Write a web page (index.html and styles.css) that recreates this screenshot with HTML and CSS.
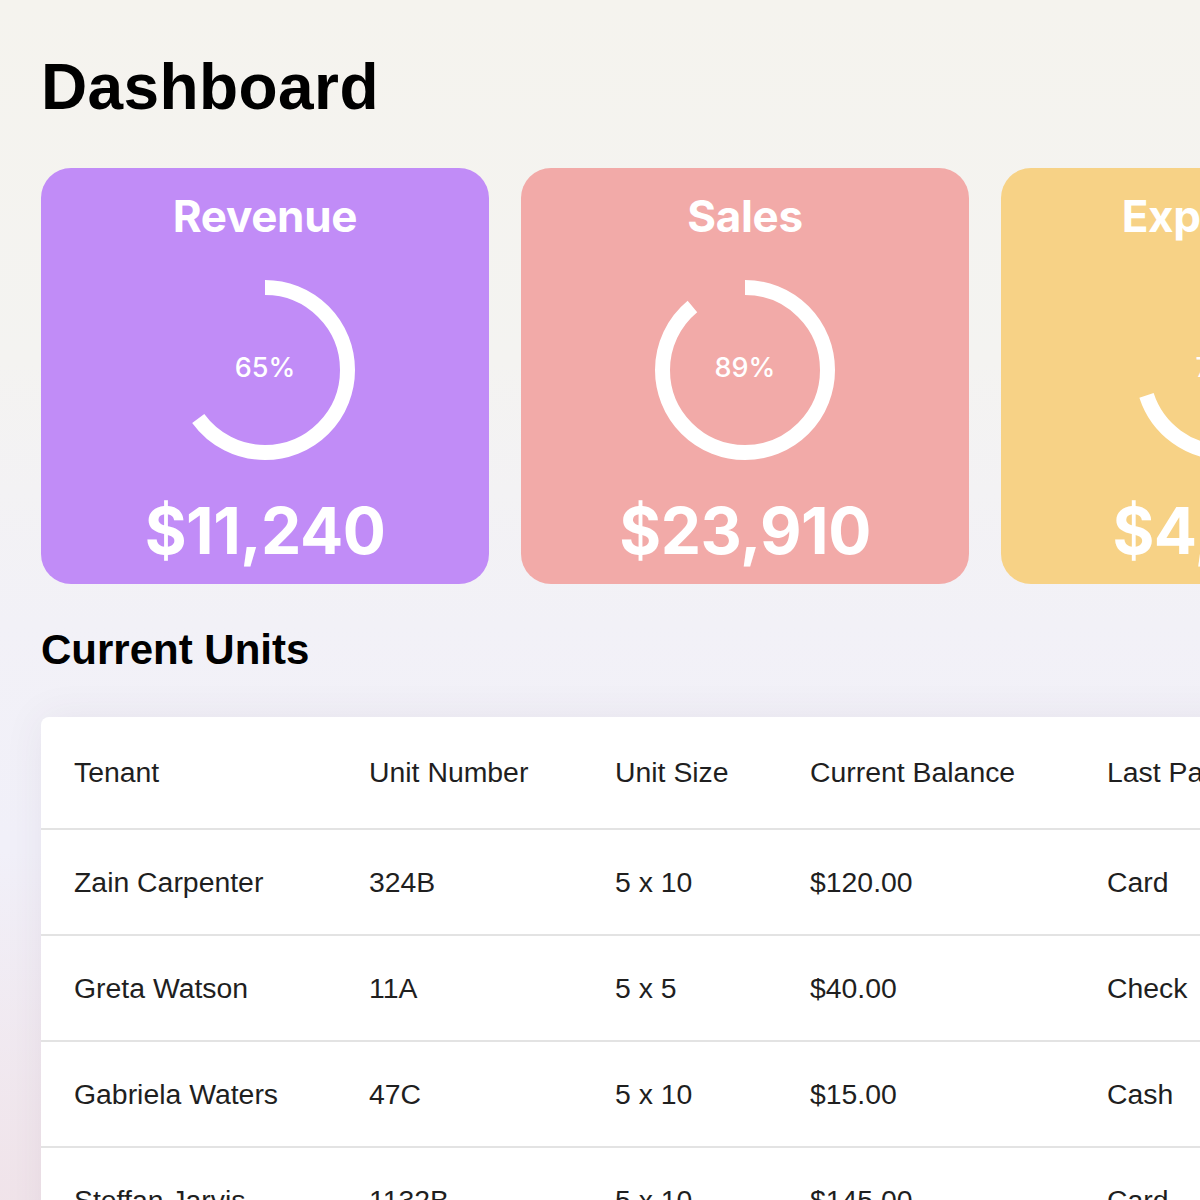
FILE: index.html
```html
<!DOCTYPE html>
<html lang="en">
<head>
<meta charset="utf-8">
<title>Dashboard</title>
<link rel="stylesheet" href="styles.css">
</head>
<body>
<main class="page">
  <h1 class="page-title">Dashboard</h1>

  <section class="stats">
    <div class="stat-card stat-revenue">
      <h2 class="stat-title">Revenue</h2>
      <div class="gauge">
        <svg class="gauge-svg" viewBox="0 0 180 180" width="180" height="180">
          <circle class="gauge-arc" cx="90" cy="90" r="82.5" pathLength="100" stroke-dasharray="65 100" transform="rotate(-90 90 90)"/>
        </svg>
        <span class="gauge-label">65%</span>
      </div>
      <div class="stat-value">$11,240</div>
    </div>

    <div class="stat-card stat-sales">
      <h2 class="stat-title">Sales</h2>
      <div class="gauge">
        <svg class="gauge-svg" viewBox="0 0 180 180" width="180" height="180">
          <circle class="gauge-arc" cx="90" cy="90" r="82.5" pathLength="100" stroke-dasharray="89 100" transform="rotate(-90 90 90)"/>
        </svg>
        <span class="gauge-label">89%</span>
      </div>
      <div class="stat-value">$23,910</div>
    </div>

    <div class="stat-card stat-expenses">
      <h2 class="stat-title">Expenses</h2>
      <div class="gauge">
        <svg class="gauge-svg" viewBox="0 0 180 180" width="180" height="180">
          <circle class="gauge-arc" cx="90" cy="90" r="82.5" pathLength="100" stroke-dasharray="70 100" transform="rotate(-90 90 90)"/>
        </svg>
        <span class="gauge-label">70%</span>
      </div>
      <div class="stat-value">$4,650</div>
    </div>
  </section>

  <h2 class="section-title">Current Units</h2>

  <div class="table-card">
    <table class="units">
      <colgroup>
        <col class="c-tenant"><col class="c-unit"><col class="c-size"><col class="c-balance"><col class="c-pay">
      </colgroup>
      <thead>
        <tr><th>Tenant</th><th>Unit Number</th><th>Unit Size</th><th>Current Balance</th><th>Last Payment</th></tr>
      </thead>
      <tbody>
        <tr><td>Zain Carpenter</td><td>324B</td><td>5 x 10</td><td>$120.00</td><td>Card</td></tr>
        <tr><td>Greta Watson</td><td>11A</td><td>5 x 5</td><td>$40.00</td><td>Check</td></tr>
        <tr><td>Gabriela Waters</td><td>47C</td><td>5 x 10</td><td>$15.00</td><td>Cash</td></tr>
        <tr><td>Steffan Jarvis</td><td>1132B</td><td>5 x 10</td><td>$145.00</td><td>Card</td></tr>
      </tbody>
    </table>
  </div>
</main>
</body>
</html>
```

FILE: styles.css
```css
html, body {
  margin: 0;
  padding: 0;
  height: 100%;
  overflow: hidden;
}

body {
  font-family: "Liberation Sans", Arial, sans-serif;
  color: #000;
  background:
    radial-gradient(ellipse 700px 500px at 0% 100%, rgba(240, 226, 232, 0.9), rgba(240, 226, 232, 0) 70%),
    linear-gradient(180deg, #f5f3ee 0%, #f4f3f1 30%, #f2f1f7 52%, #f1f0f9 70%, #f1f0f8 100%);
}

.page {
  padding: 50px 0 0 41px;
  width: 1600px;
}

.page-title {
  margin: 0;
  font-family: "Liberation Sans", Arial, sans-serif;
  font-weight: 700;
  font-size: 64px;
  line-height: 74px;
  letter-spacing: 0.4px;
  color: #000;
}

.stats {
  display: flex;
  gap: 32px;
  margin-top: 44px;
}

.stat-card {
  flex: 0 0 448px;
  height: 416px;
  box-sizing: border-box;
  border-radius: 30px;
  padding-top: 22px;
  display: flex;
  flex-direction: column;
  align-items: center;
  color: #fff;
  font-family: Inter, "Noto Sans", sans-serif;
}

.stat-revenue { background: #c18cf7; }
.stat-sales { background: #f2aaa8; }
.stat-expenses { background: #f7d286; }

.stat-title {
  margin: 0;
  font-size: 44px;
  line-height: 53px;
  font-weight: 700;
  letter-spacing: -0.3px;
}

.gauge {
  margin-top: 37px;
  width: 180px;
  height: 180px;
  display: grid;
  place-items: center;
}

.gauge-svg,
.gauge-label {
  grid-area: 1 / 1;
}

.gauge-arc {
  fill: none;
  stroke: #fff;
  stroke-width: 15;
  stroke-linecap: butt;
}

.gauge-label {
  font-size: 27px;
  font-weight: 500;
  margin-top: -5px;
}

.stat-value {
  margin-top: 32px;
  font-size: 64px;
  line-height: 77px;
  font-weight: 700;
  letter-spacing: -0.5px;
}

.section-title {
  margin: 42px 0 0;
  font-family: "Liberation Sans", Arial, sans-serif;
  font-weight: 700;
  font-size: 42px;
  line-height: 48px;
  color: #000;
}

.table-card {
  margin-top: 43px;
  background: #fff;
  border-radius: 8px;
  box-shadow: 0 0 40px rgba(90, 60, 90, 0.07);
  width: 1500px;
  overflow: hidden;
}

.units {
  border-collapse: collapse;
  table-layout: fixed;
  width: 100%;
  font-family: "Liberation Sans", Arial, sans-serif;
  font-size: 28.4px;
  color: #1f1f1f;
}

.c-tenant { width: 295px; }
.c-unit { width: 246px; }
.c-size { width: 195px; }
.c-balance { width: 297px; }

.units th,
.units td {
  text-align: left;
  font-weight: 400;
  padding: 36px 0 36px 33px;
  line-height: 32px;
  white-space: nowrap;
  border-bottom: 2px solid #e3e3e3;
}

.units th {
  padding-top: 39px;
  padding-bottom: 40px;
}
```
